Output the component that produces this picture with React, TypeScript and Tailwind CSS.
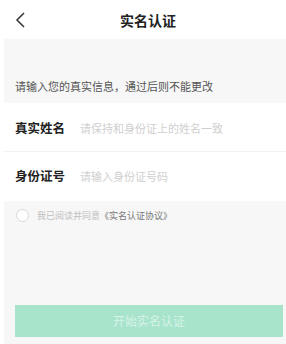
import React from "react";

const App: React.FC = () => {
  return (
    <div
      className="w-[286px] h-[344px] bg-white flex flex-col overflow-hidden"
      style={{ fontFamily: '"Noto Sans CJK SC", "Noto Sans", sans-serif' }}
    >
      <div className="h-[39px] flex items-center relative">
        <svg
          className="absolute left-[14px] top-[11px]"
          width="14"
          height="18"
          viewBox="0 0 14 18"
          fill="none"
        >
          <path d="M10 2 L3 9 L10 16" stroke="#333" strokeWidth="1.5" />
        </svg>
        <div className="flex-1 text-center text-[14px] font-semibold text-[#222] pl-[10px] pt-[1px]">
          实名认证
        </div>
      </div>

      <div className="ml-[4px] h-[64px] bg-[#f7f7f7] flex items-end pb-[11px] pl-[11px]">
        <span className="text-[11px] text-[#555] leading-none">
          请输入您的真实信息，通过后则不能更改
        </span>
      </div>

      <div className="ml-[4px] flex flex-col">
        <div className="h-[49px] flex items-center pl-[11px] pt-[2px] border-b border-[#f2f2f2]">
          <span className="text-[12.5px] font-bold text-[#222] w-[65px]">真实姓名</span>
          <span className="text-[11px] text-[#cfcfcf]">请保持和身份证上的姓名一致</span>
        </div>
        <div className="h-[49px] flex items-center pl-[11px]">
          <span className="text-[12.5px] font-bold text-[#222] w-[65px]">身份证号</span>
          <span className="text-[11px] text-[#cfcfcf]">请输入身份证号码</span>
        </div>
      </div>

      <div className="ml-[4px] flex-1 bg-[#f7f7f7] flex flex-col">
        <div className="flex items-center pl-[12px] pt-[8px] gap-[8px]">
          <span className="w-[13px] h-[13px] rounded-full border border-[#d8d8d8] bg-white" />
          <span className="text-[9px] text-[#c0c0c0]">
            我已阅读并同意<span className="text-[#777]">《实名认证协议》</span>
          </span>
        </div>
        <div className="flex-1" />
        <div className="pl-[11px] pr-[3px] pb-[7px]">
          <div className="h-[32px] bg-[#a8e4cc] flex items-center justify-center text-[12px] text-[#d6f3e8]">
            开始实名认证
          </div>
        </div>
      </div>
    </div>
  );
};

export default App;
